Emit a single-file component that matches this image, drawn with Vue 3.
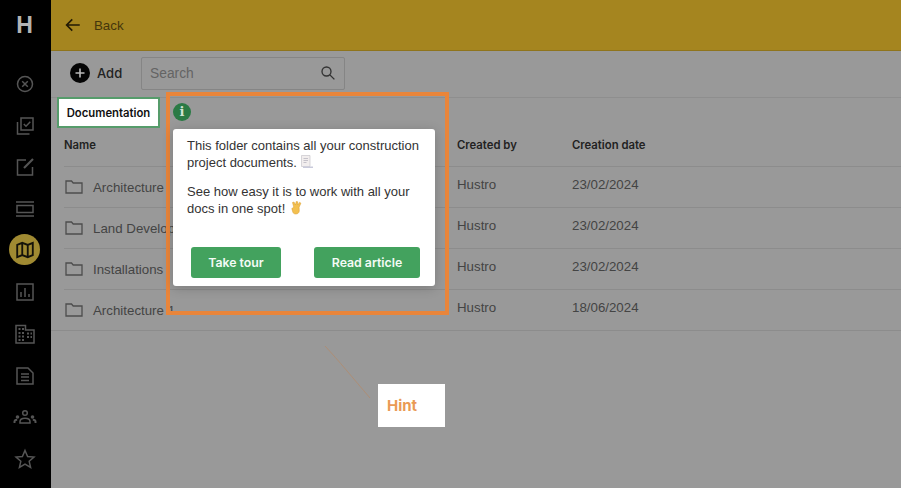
<script setup>
const rows = [
  { name: 'Architecture', by: 'Hustro', date: '23/02/2024' },
  { name: 'Land Development', by: 'Hustro', date: '23/02/2024' },
  { name: 'Installations', by: 'Hustro', date: '23/02/2024' },
  { name: 'Architecture 1', by: 'Hustro', date: '18/06/2024' }
]
</script>

<template>
  <div class="app">
    <aside class="sidebar">
      <div class="logo">H</div>
      <nav class="nav">
        <div class="nav-item">
          <svg viewBox="0 0 24 24"><circle cx="12" cy="12" r="7.500"/><path d="M9.200 9.200l5.600 5.600M14.800 9.200l-5.600 5.600"/></svg>
        </div>
        <div class="nav-item">
          <svg viewBox="0 0 24 24"><path d="M4.500 8v12h12"/><rect x="8" y="4" width="12" height="12"/><path d="M10.800 10l2.200 2.200 4.300-4.400"/></svg>
        </div>
        <div class="nav-item">
          <svg viewBox="0 0 24 24"><path d="M13 5H4.500v15h15v-8"/><path d="M11 13l9-9" stroke-width="2.200"/></svg>
        </div>
        <div class="nav-item">
          <svg viewBox="0 0 24 24"><path d="M3 5h18M3 19h18"/><rect x="4" y="8.500" width="16" height="7"/></svg>
        </div>
        <div class="nav-item active">
          <span class="active-dot">
            <svg viewBox="0 0 24 24"><path d="M3.500 6.500l5.500-2.300 6 2.300 5.500-2.300v13.300l-5.500 2.300-6-2.300-5.500 2.300zM9 4.200v13.300M15 6.500v13.300"/></svg>
          </span>
        </div>
        <div class="nav-item">
          <svg viewBox="0 0 24 24"><rect x="4" y="4" width="16" height="16"/><path d="M8 17v-5M12 17V8M16 17v-3"/></svg>
        </div>
        <div class="nav-item">
          <svg viewBox="0 0 24 24"><path d="M3 21V3.500h9.500V8H21v13z"/><path d="M5.500 7h2M9 7h2M5.500 11h2M9 11h2M5.500 14.500h2M9 14.500h2M5.500 18h2M9 18h2M14 11.500h2M17.500 11.500h1.500M14 15h2M17.500 15h1.500" stroke-width="1.800"/></svg>
        </div>
        <div class="nav-item">
          <svg viewBox="0 0 24 24"><path d="M4 4h11l5 5v11H4z"/><path d="M8 10h8M8 13h8M8 16.500h8"/></svg>
        </div>
        <div class="nav-item">
          <svg viewBox="0 0 24 24"><circle cx="12" cy="8" r="2.300"/><path d="M7 18v-1.500c0-2 2.300-3.300 5-3.300s5 1.300 5 3.300V18z"/><circle class="solid" cx="4.500" cy="12" r="1.800"/><circle class="solid" cx="19.500" cy="12" r="1.800"/><path d="M1.500 18v-1.500c0-1 .8-1.700 2.700-1.800M22.500 18v-1.500c0-1-.8-1.700-2.700-1.800" stroke-width="2"/></svg>
        </div>
        <div class="nav-item">
          <svg viewBox="0 0 24 24"><path d="M12 3.500l2.600 6 6.400.5-4.800 4.300 1.400 6.200-5.600-3.300-5.600 3.300 1.400-6.200L3 10l6.400-.5z"/></svg>
        </div>
      </nav>
    </aside>

    <main class="main">
      <header class="topbar">
        <svg class="back-icon" viewBox="0 0 24 24"><path d="M21 12H4M11 4.500L3.500 12l7.500 7.500"/></svg>
        <span class="back-label">Back</span>
      </header>

      <section class="toolbar">
        <div class="add">
          <span class="add-circle">
            <svg viewBox="0 0 20 20"><path d="M10 5.500v9M5.500 10h9"/></svg>
          </span>
          <span>Add</span>
        </div>
        <div class="search">
          <span>Search</span>
          <svg viewBox="0 0 24 24"><circle cx="10" cy="10" r="6"/><path d="M14.500 14.500l6 6"/></svg>
        </div>
      </section>

      <div class="tab-row">
        <div class="tab">Documentation</div>
      </div>

      <section class="table">
        <div class="row head">
          <span class="col-name">Name</span>
          <span class="col-by">Created by</span>
          <span class="col-date">Creation date</span>
        </div>
        <div v-for="row in rows" :key="row.name" class="row">
          <span class="col-name name-cell">
            <svg class="folder" viewBox="0 0 18 14"><path d="M1 1h5.500l1.700 2H17v10H1z"/></svg>
            {{ row.name }}
          </span>
          <span class="col-by raised">{{ row.by }}</span>
          <span class="col-date raised">{{ row.date }}</span>
        </div>
      </section>
    </main>

    <div class="frame"></div>
    <div class="info">i</div>

    <div class="popup">
      <p>This folder contains all your construction project documents.
        <svg class="emoji" viewBox="0 0 14 14"><path class="paper" d="M1.500 0.500h8.500v11H1.500z"/><path class="lines" d="M3.500 3.500h4.500M3.500 5.500h4.500M3.500 7.500h3"/><path class="shade" d="M3 11.500h10v1.500H3z"/></svg>
      </p>
      <p>See how easy it is to work with all your docs in one spot!
        <svg class="emoji" viewBox="0 0 14 14"><path class="hand" d="M3.500 1.500L5 1l1.500 3L7.200.5 8.800.8 8.700 4l2-2.800 1.200 1-1.800 4 .2 3.800c-.3 2-1.600 3-3.500 3S3.800 12 3.500 10L2.800 7.500l2-1.200z"/></svg>
      </p>
      <div class="actions">
        <button class="btn tour" type="button">Take tour</button>
        <button class="btn read" type="button">Read article</button>
      </div>
    </div>

    <svg class="pointer" viewBox="0 0 60 60"><path d="M1 1C15 16 28 32 46 53"/></svg>
    <div class="hint">Hint</div>
  </div>
</template>

<style>
html, body { margin: 0; background: #999; }
</style>

<style scoped>
.app {
  position: relative;
  display: flex;
  width: 901px;
  height: 488px;
  overflow: hidden;
  background: #999;
  font-family: "Liberation Sans", Inter, sans-serif;
  color: #3a3a3a;
}
.sidebar {
  flex: 0 0 51px;
  width: 51px;
  background: #000;
  display: flex;
  flex-direction: column;
  align-items: flex-start;
}
.logo {
  width: 49px;
  height: 50px;
  text-align: center;
  line-height: 50px;
  font-family: "Liberation Sans", sans-serif;
  font-size: 23px;
  font-weight: 700;
  color: #b3b3b3;
}
.nav {
  display: flex;
  flex-direction: column;
  padding-top: 13px;
}
.nav-item {
  width: 49px;
  height: 41.700px;
  display: flex;
  align-items: center;
  justify-content: center;
}
.nav-item svg {
  width: 24px;
  height: 24px;
  fill: none;
  stroke: #555;
  stroke-width: 1.500;
}
.nav-item .solid { fill: #555; stroke: none; }
.active-dot {
  width: 31px;
  height: 31px;
  margin-top: -2px;
  border-radius: 50%;
  background: #a08a32;
  display: flex;
  align-items: center;
  justify-content: center;
}
.nav-item .active-dot svg {
  stroke: #15130a;
  width: 22px;
  height: 22px;
  stroke-width: 2;
}
.main {
  flex: 1;
  min-width: 0;
  display: flex;
  flex-direction: column;
}
.topbar {
  height: 51px;
  flex: none;
  box-sizing: border-box;
  background: #a5851f;
  border-bottom: 1px solid #8f741c;
  display: flex;
  align-items: center;
  padding-left: 13px;
}
.back-icon {
  width: 18px;
  height: 18px;
  fill: none;
  stroke: #221a05;
  stroke-width: 2.200;
}
.back-label {
  margin-left: 12px;
  font-size: 13.300px;
  color: #44360c;
}
.toolbar {
  height: 47px;
  flex: none;
  box-sizing: border-box;
  border-bottom: 1px solid #8e8e8e;
  display: flex;
  align-items: center;
  padding: 0 0 2px 19px;
}
.add {
  display: flex;
  align-items: center;
  gap: 7px;
  width: 71px;
  font-family: Inter, sans-serif;
  font-size: 13px;
  font-weight: 500;
  color: #222;
}
.add-circle {
  width: 20px;
  height: 20px;
  border-radius: 50%;
  background: #050505;
  display: flex;
}
.add-circle svg {
  width: 20px;
  height: 20px;
  fill: none;
  stroke: #bbb;
  stroke-width: 1.600;
}
.search {
  width: 204px;
  height: 33px;
  box-sizing: border-box;
  border: 1px solid #858585;
  border-radius: 2px;
  display: flex;
  align-items: center;
  justify-content: space-between;
  padding: 0 7px 0 8px;
  font-size: 13.800px;
  color: #646464;
}
.search svg {
  width: 18px;
  height: 18px;
  fill: none;
  stroke: #333;
  stroke-width: 1.800;
}
.tab-row {
  height: 30px;
  flex: none;
  padding-left: 6px;
  margin-top: -1px;
}
.tab {
  width: 103px;
  height: 31px;
  box-sizing: border-box;
  border: 2px solid #569c6b;
  background: #fff;
  color: #111;
  font-family: Inter, sans-serif;
  font-size: 11.300px;
  font-weight: 600;
  display: flex;
  align-items: center;
  justify-content: center;
}
.table {
  font-size: 13.300px;
}
.row {
  height: 41px;
  display: flex;
  align-items: center;
  box-sizing: border-box;
  border-bottom: 1px solid #8c8c8c;
  margin-left: 13px;
  color: #444;
}
.row:last-child {
  margin-left: 0;
  padding-left: 13px;
}
.row.head {
  height: 40px;
  padding-bottom: 3px;
  font-family: Inter, sans-serif;
  font-size: 11.300px;
  font-weight: 600;
  color: #222;
}
.col-name { width: 393px; flex: none; white-space: nowrap; }
.col-by { width: 115px; flex: none; }
.col-date { flex: none; }
.raised { padding-bottom: 6px; }
.name-cell {
  display: flex;
  align-items: center;
  gap: 10px;
}
.folder {
  width: 18px;
  height: 14px;
  margin-left: 1px;
  fill: none;
  stroke: #4d4d4d;
  stroke-width: 1.300;
}
.frame {
  position: absolute;
  left: 166px;
  top: 92px;
  width: 283px;
  height: 223px;
  box-sizing: border-box;
  border: 4px solid #e9853a;
}
.info {
  position: absolute;
  left: 173px;
  top: 103px;
  width: 18px;
  height: 18px;
  border-radius: 50%;
  background: #2a7a45;
  color: #cfe3d5;
  font-family: "DejaVu Serif", serif;
  font-size: 13px;
  font-weight: 700;
  line-height: 18px;
  text-align: center;
}
.popup {
  position: absolute;
  left: 173px;
  top: 129px;
  width: 262px;
  height: 157px;
  box-sizing: border-box;
  padding: 9px 10px 0 14px;
  background: #fff;
  border-radius: 3px;
  box-shadow: 0 2px 12px rgba(0, 0, 0, 0.2);
  color: #333;
  font-size: 13px;
  line-height: 16.500px;
}
.popup p {
  margin: 0 0 13px;
}
.emoji {
  width: 14px;
  height: 14px;
  vertical-align: -2px;
}
.paper { fill: #f2eeee; stroke: #c9c5cc; stroke-width: 0.700; }
.lines { fill: none; stroke: #b9b6c0; stroke-width: 0.800; }
.shade { fill: #c9cadb; }
.hand { fill: #f3c04f; stroke: #d99a2b; stroke-width: 0.500; }
.actions {
  position: absolute;
  left: 18px;
  right: 15px;
  top: 118px;
  display: flex;
  justify-content: space-between;
}
.btn {
  height: 31px;
  border: 0;
  border-radius: 3px;
  background: #43a25e;
  color: #f4fbf6;
  font-family: Inter, sans-serif;
  font-size: 12.300px;
  font-weight: 600;
  padding: 0;
}
.tour { width: 90px; }
.read { width: 106px; }
.pointer {
  position: absolute;
  left: 324px;
  top: 345px;
  width: 60px;
  height: 60px;
  fill: none;
  stroke: #ad8e76;
  stroke-width: 1;
}
.hint {
  position: absolute;
  left: 378px;
  top: 384px;
  width: 67px;
  height: 43px;
  box-sizing: border-box;
  padding-left: 9px;
  background: #fff;
  color: #ea9a55;
  font-family: Inter, sans-serif;
  font-size: 15px;
  font-weight: 700;
  line-height: 43px;
}
</style>
